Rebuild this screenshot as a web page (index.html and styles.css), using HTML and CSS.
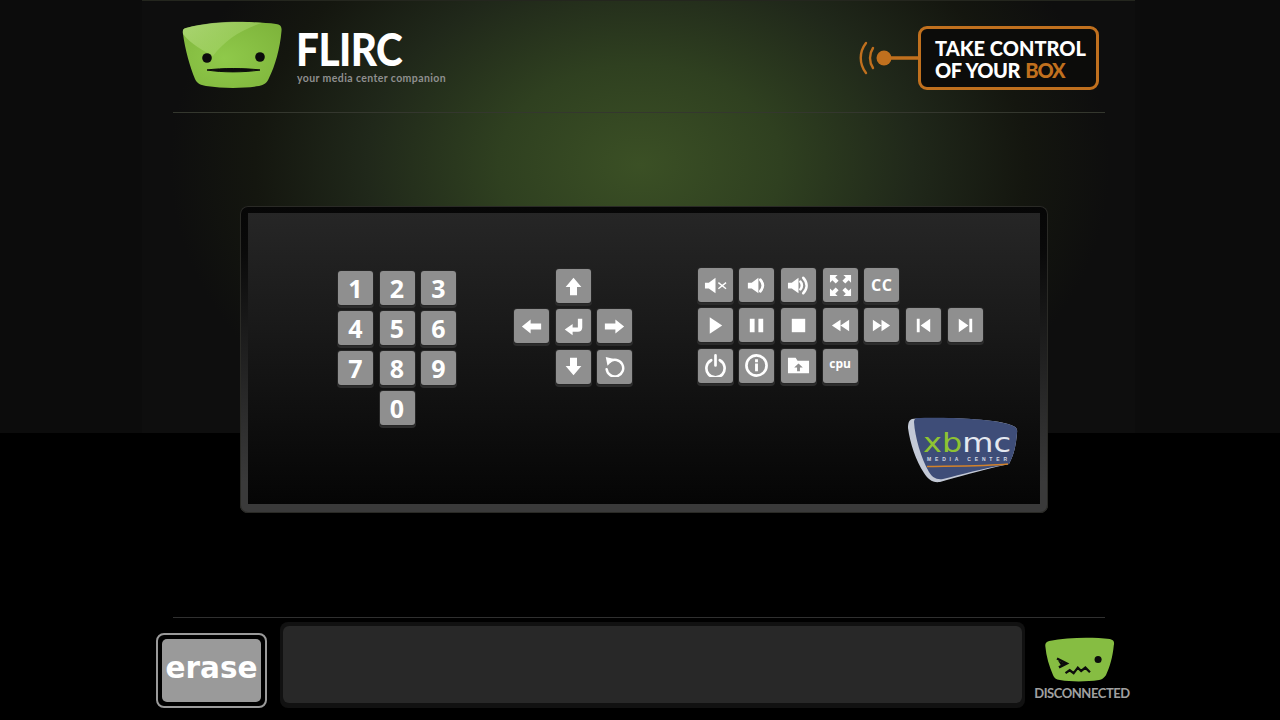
FILE: index.html
```html
<!DOCTYPE html>
<html lang="en">
<head>
<meta charset="utf-8">
<title>Flirc</title>
<link rel="stylesheet" href="styles.css">
</head>
<body>
<div class="page">
  <header class="header">
    <div class="brand">
      <svg class="face" viewBox="0 0 100 68" aria-hidden="true">
        <defs>
          <radialGradient id="fg" cx="0.42" cy="0.55" r="0.7"><stop offset="0" stop-color="#8fc94a"/><stop offset="1" stop-color="#7fb53c"/></radialGradient>
          <linearGradient id="hl" x1="0" y1="0" x2="1" y2="0.6"><stop offset="0" stop-color="#b9df85" stop-opacity=".75"/><stop offset="1" stop-color="#a6d568" stop-opacity=".35"/></linearGradient>
        </defs>
        <path d="M4 7C30 0 70 0 94 3C98 3.500 100 5 99.500 10C98 28 93 45 87 57C85 62 82 64 77 65C60 67.500 42 67.500 24 65C18 64 15 62 13 58C8 46 3 28 1 13C0.500 9 1 8 4 7Z" fill="url(#fg)"/>
        <path d="M4 7C30 0 60 0 80 2C60 8 42 20 31 35C22 30 10 24 1 13C0.500 9 1 8 4 7Z" fill="url(#hl)"/>
        <circle cx="25" cy="37" r="4.800" fill="#0c0c0c"/>
        <circle cx="78" cy="36" r="4.800" fill="#0c0c0c"/>
        <path d="M25 49C40 47 62 47 78 49C62 51.500 40 51.500 25 49Z" fill="#0c0c0c" stroke="#0c0c0c"/>
      </svg>
      <div class="brand-text">
        <div class="wordmark">FLIRC</div>
        <div class="tagline">your media center companion</div>
      </div>
    </div>
    <div class="slogan">
      <svg class="signal" viewBox="0 0 60 40" aria-hidden="true">
        <path d="M8 5C1 14 1 26 8 35M15 10C11 16 11 24 15 30" fill="none" stroke="#c0701e" stroke-width="2.400" stroke-linecap="round"/>
        <circle cx="26" cy="20" r="7.500" fill="#c0701e"/>
        <path d="M26 20H60" stroke="#c0701e" stroke-width="3.600"/>
      </svg>
      <div class="slogan-box">TAKE CONTROL<br><span class="slogan-second">OF YOUR <span class="slogan-accent">BOX</span></span></div>
    </div>
  </header>

  <main class="panel">
    <div class="panel-inner">
      <div class="keygroups">
        <div class="keys numpad">
          <button class="key">1</button><button class="key">2</button><button class="key">3</button>
          <button class="key">4</button><button class="key">5</button><button class="key">6</button>
          <button class="key">7</button><button class="key">8</button><button class="key">9</button>
          <button class="key zero">0</button>
        </div>
        <div class="keys arrows">
          <button class="key k-up"><svg viewBox="0 0 24 24"><path d="M12 2L21 12.500H16V22H8V12.500H3Z"/></svg></button>
          <button class="key k-left"><svg viewBox="0 0 24 24"><path d="M1 12L11 4V8.500H23V15.500H11V20Z"/></svg></button>
          <button class="key k-enter"><svg viewBox="0 0 24 24"><path d="M17 3H22V13C22 16 20 18 17 18H11V22L2 15.500L11 9V13H17Z"/></svg></button>
          <button class="key k-right"><svg viewBox="0 0 24 24"><path d="M23 12L13 4V8.500H1V15.500H13V20Z"/></svg></button>
          <button class="key k-down"><svg viewBox="0 0 24 24"><path d="M12 22L21 11.500H16V2H8V11.500H3Z"/></svg></button>
          <button class="key k-back"><svg viewBox="0 0 24 24"><path class="line" d="M6.500 6.500A9.500 9.500 0 1 1 3 15"/><path d="M2 1L11.500 3.500L4 11Z"/></svg></button>
        </div>
        <div class="keys media">
          <button class="key"><svg viewBox="0 0 24 24"><path d="M1 9H5L12 4V20L5 15H1Z"/><path class="thin" d="M15 9L23 15.500M23 9L15 15.500"/></svg></button>
          <button class="key"><svg viewBox="0 0 24 24"><path d="M3 9H7L14 4V20L7 15H3Z"/><path class="line" d="M16 6C19.500 10 19.500 14 16 18"/></svg></button>
          <button class="key"><svg viewBox="0 0 24 24"><path d="M1 9H5L12 4V20L5 15H1Z"/><path class="line" d="M14 8C16 10 16 14 14 16M17 4C21.500 9 21.500 15 17 20"/></svg></button>
          <button class="key"><svg viewBox="0 0 24 24"><path d="M1 1H9L6.500 3.500L10 7L7 10L3.500 6.500L1 9ZM23 1V9L20.500 6.500L17 10L14 7L17.500 3.500L15 1ZM1 23V15L3.500 17.500L7 14L10 17L6.500 20.500L9 23ZM23 23H15L17.500 20.500L14 17L17 14L20.500 17.500L23 15Z"/></svg></button>
          <button class="key key-label">CC</button>
          <button class="key"><svg viewBox="0 0 24 24"><path d="M6 3.500L19 12L6 20.500Z"/></svg></button>
          <button class="key"><svg viewBox="0 0 24 24"><path d="M5 5H10V19H5ZM14 5H19V19H14Z"/></svg></button>
          <button class="key"><svg viewBox="0 0 24 24"><path d="M5 5H19V19H5Z"/></svg></button>
          <button class="key"><svg viewBox="0 0 24 24"><path d="M3 12L12 6V18ZM12 12L21 6V18Z"/></svg></button>
          <button class="key"><svg viewBox="0 0 24 24"><path d="M21 12L12 6V18ZM12 12L3 6V18Z"/></svg></button>
          <button class="key"><svg viewBox="0 0 24 24"><path d="M5 5H8V19H5ZM19 5V19L9 12Z"/></svg></button>
          <button class="key"><svg viewBox="0 0 24 24"><path d="M19 5H16V19H19ZM5 5V19L15 12Z"/></svg></button>
          <button class="key"><svg viewBox="0 0 24 24"><path class="line" d="M7.500 6.500A9.500 9.500 0 1 0 16.500 6.500M12 1.500V12"/></svg></button>
          <button class="key"><svg viewBox="0 0 24 24"><circle class="line" cx="12" cy="12" r="10.500"/><path d="M10.500 10H13.500V18H10.500ZM10.500 5.500H13.500V8.500H10.500Z"/></svg></button>
          <button class="key"><svg viewBox="0 0 24 24"><path fill-rule="evenodd" d="M1 4H9L11 7H23V20H1ZM12 10L7.500 14H10.500V18H13.500V14H16.500Z"/></svg></button>
          <button class="key key-label key-cpu">cpu</button>
        </div>
      </div>
      <svg class="xbmc" viewBox="0 0 110 66" aria-label="XBMC Media Center">
        <path d="M4 2C20 0 80 1 100 7C106 9 110 10 109 16C108 28 106 38 101 47C70 54 50 60 32 65C24 66 20 62 16 56C8 44 2 26 0 11C0 6 1 3 4 2Z" fill="#c3c9d6"/>
        <path d="M9 1C30 0 80 1 100 7C106 9 110 10 109 16C108 28 106 38 101 47C72 52 55 57 35 62C28 63 24 60 21 55C13 41 7 20 6 5C6 3 7 1 9 1Z" fill="#3e4d78"/>
        <path d="M19 49.500C50 49 80 49 100 47" stroke="#d3822a" stroke-width="1.600" fill="none"/>
        <text class="xbmc-name" x="15" y="34.500" textLength="88" lengthAdjust="spacingAndGlyphs"><tspan class="xb">xb</tspan>mc</text>
        <text class="xbmc-sub" x="19" y="44" textLength="80" lengthAdjust="spacing">MEDIA CENTER</text>
      </svg>
    </div>
  </main>

  <footer class="footer">
    <button class="erase"><span class="erase-inner">erase</span></button>
    <div class="log-wrap"><div class="log"></div></div>
    <div class="status">
      <svg class="status-face" viewBox="0 0 72 46" aria-hidden="true">
        <path d="M5 4C25 0 50 0 67 2C71 3 72 5 71 9C70 20 67 31 63 39C61 42 59 43 56 44C42 46 28 46 16 44C12 43 10 42 9 39C5 30 2 20 1 9C1 6 2 5 5 4Z" fill="#86bd42"/>
        <path d="M13 22L23 27L15 31" fill="none" stroke="#0c0c0c" stroke-width="2.400"/>
        <path d="M14 24L22 27L17 29Z" fill="#0c0c0c"/>
        <circle cx="55" cy="23" r="3.600" fill="#0c0c0c"/>
        <path d="M21.700 37L26 34L30 37L34.300 31.300L37.700 34.700L42 31.300L46.700 36" fill="none" stroke="#0c0c0c" stroke-width="2.300"/>
      </svg>
      <div class="status-text">DISCONNECTED</div>
    </div>
  </footer>
</div>
</body>
</html>
```

FILE: styles.css
```css
* { box-sizing: border-box; }
html, body { margin: 0; height: 720px; overflow: hidden; }
body {
  background-color: #000;
  background-image:
    linear-gradient(#24261e, #24261e),
    radial-gradient(ellipse 470px 335px at 640px 165px, #3b5025 0, #2f4020 30%, #20281a 58%, #14160f 82%, rgba(14, 14, 12, 0) 100%),
    linear-gradient(90deg, #0c0c0c 0, #0c0c0c 142px, #0e0e0e 142px, #0e0e0e 1135px, #0c0c0c 1135px);
  background-size: 993px 1px, 1280px 433px, 1280px 433px;
  background-position: 142px 0, 0 0, 0 0;
  background-repeat: no-repeat;
  font-family: "Liberation Sans", sans-serif;
}
.page { width: 1280px; height: 720px; padding-left: 173px; display: flex; flex-direction: column; align-items: flex-start; }

.header {
  width: 932px; height: 113px; flex: none; padding: 21px 6px 0 9px;
  display: flex; justify-content: space-between; align-items: flex-start;
  border-bottom: 1px solid #34372e;
}
.brand { display: flex; gap: 14px; }
.face { width: 100px; height: 68px; display: block; }
.brand-text { padding-top: 8px; }
.wordmark {
  font: 900 45px/40px "Lato", sans-serif; color: #fff; letter-spacing: -.6px; height: 40px;
  transform: scaleX(.9); transform-origin: left center;
}
.tagline { font: 700 10.500px/12px "Lato", sans-serif; color: #8f8f8f; letter-spacing: .4px; margin: 3px 0 0 1px; }

.slogan { display: flex; align-items: center; margin-top: 5px; }
.signal { width: 60px; height: 40px; display: block; }
.slogan-box {
  width: 181px; height: 64px; border: 3.500px solid #c0701e; border-radius: 9px; background: #0c0c0a;
  padding: 8px 0 0 14px; font: 900 20px/22px "Lato", sans-serif; color: #fff; letter-spacing: 0; white-space: nowrap;
}
.slogan-second { letter-spacing: -.5px; word-spacing: 1px; }
.slogan-accent { color: #c0701e; letter-spacing: -1px; }

.panel {
  width: 808px; height: 307px; flex: none; margin: 93px 0 0 67px; padding: 7px 8px 9px 8px;
  background: linear-gradient(#060606 0, #0a0a0a 15%, #3a3a3a 90%);
  border-radius: 8px; box-shadow: inset 0 0 0 1px #2a2a26;
}
.panel-inner {
  height: 100%; padding: 55px 0 0 90px;
  background: linear-gradient(#262626, #050505);
  position: relative;
}
.keygroups { display: flex; align-items: flex-start; }
.keys { display: grid; grid-auto-rows: 34px; column-gap: 6.500px; row-gap: 6.300px; }
.numpad { grid-template-columns: repeat(3, 35px); margin-top: 2.500px; }
.zero { grid-column: 2; }
.arrows { grid-template-columns: repeat(3, 35px); margin-left: 58px; margin-top: 1px; }
.k-up { grid-column: 2; grid-row: 1; }
.k-left { grid-column: 1; grid-row: 2; }
.k-enter { grid-column: 2; grid-row: 2; }
.k-right { grid-column: 3; grid-row: 2; }
.k-down { grid-column: 2; grid-row: 3; }
.k-back { grid-column: 3; grid-row: 3; }
.media { grid-template-columns: repeat(7, 35px); column-gap: 6.700px; margin-left: 65.500px; }
.media .key:nth-child(6) { grid-column: 1; }
.media .key:nth-child(13) { grid-column: 1; }

.key {
  width: 35px; height: 34px; padding: 0; border: 0; border-radius: 3px;
  background: #8f8f8f; color: #fff;
  box-shadow: 0 0 0 1px #262626, 0 2px 0 1px #2c2c2c;
  font: 700 25px/34px "Open Sans", sans-serif;
  display: flex; align-items: center; justify-content: center;
}
.key svg { width: 23px; height: 23px; fill: #fff; display: block; }
.arrows .key svg { width: 21px; height: 21px; }
.key svg .line { fill: none; stroke: #fff; stroke-width: 2.800; stroke-linecap: round; }
.key svg .thin { fill: none; stroke: #fff; stroke-width: 1.400; }
.key-label { font-size: 16px; letter-spacing: .5px; }
.key-cpu { font-size: 12px; letter-spacing: 0; padding-bottom: 3px; }

.xbmc { position: absolute; right: 22px; bottom: 21px; width: 110px; height: 66px; }
.xbmc-name { font: 400 27px "DejaVu Sans", sans-serif; fill: #e4e8f0; }
.xb { fill: #8fc332; }
.xbmc-sub { font: 700 5px "Liberation Sans", sans-serif; fill: #d5dae4; }

.footer {
  width: 932px; height: 103px; flex: none; margin-top: 104px; border-top: 1px solid #303030;
  display: flex; align-items: flex-start;
}
.erase {
  width: 111px; height: 75px; flex: none; margin: 15px 0 0 -17px; padding: 4px; background: #000;
  border: 2px solid #9a9a9a; border-radius: 8px;
}
.erase-inner {
  display: flex; align-items: center; justify-content: center; width: 100%; height: 100%; padding-bottom: 3px;
  background: #9a9a9a; border-radius: 5px; color: #fff;
  font: 700 29.500px/1 "DejaVu Sans", sans-serif;
}
.log-wrap {
  width: 745px; height: 86px; flex: none; margin: 4px 0 0 13px; padding: 4px 3px 5px; background: #111; border-radius: 8px;
}
.log { height: 100%; width: 100%; background: #282828; border-radius: 6px; }
.status { width: 100px; flex: none; margin: 19px 0 0 7px; display: flex; flex-direction: column; align-items: center; }
.status-face { width: 71px; height: 45px; display: block; margin-left: -5px; }
.status-text { font: 700 13px/14px "Lato", sans-serif; color: #a0a0a0; letter-spacing: -.45px; margin-top: 4px; white-space: nowrap; }
```
